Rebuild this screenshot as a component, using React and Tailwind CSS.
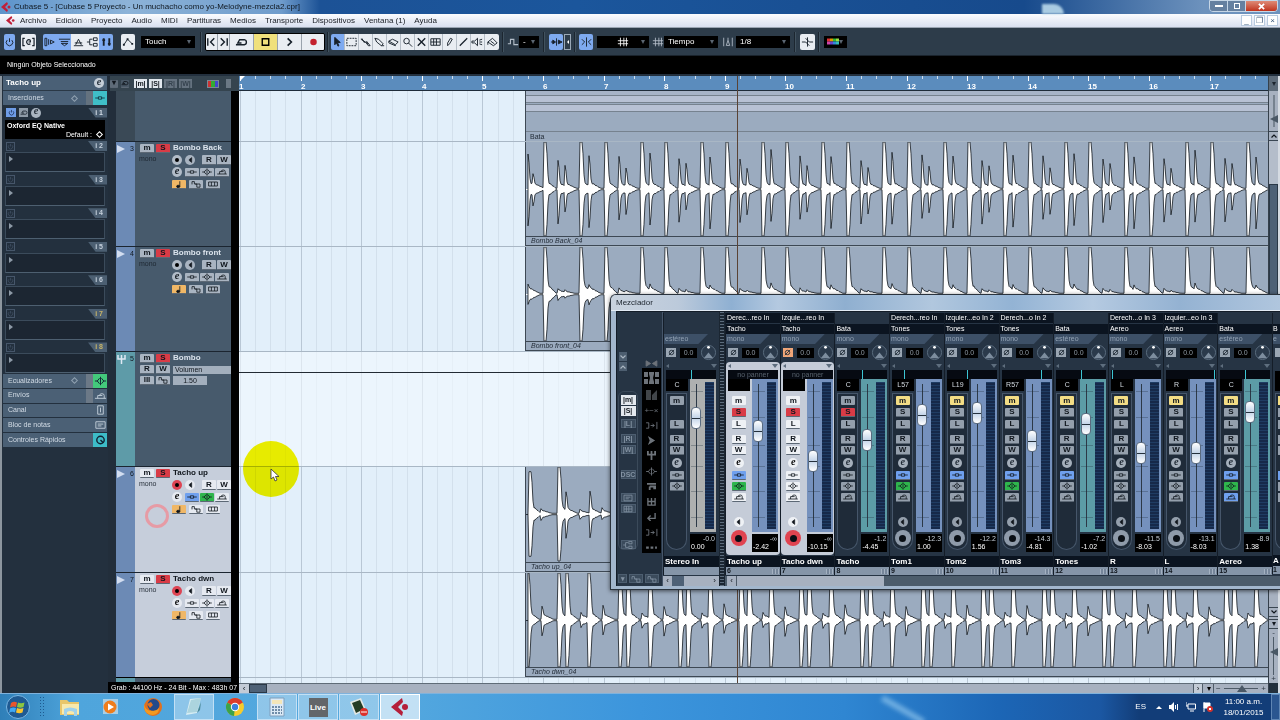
// src/App.jsx
import { useState } from "react";

// --- timeline geometry ---
const BAR = 60.6;
const barX = (n) => Math.round((n - 1) * BAR);
const EVENT_X = 286;

// hits per bar: [offset, amplitude]
const PATTERNS = {
  back: { hits: [[1, 1], [15, 0.75], [22, 0.55], [37, 1], [46, 0.85]], extra: [[7, 0.38]], body: 0.24, line: "#ffffff" },
  front: { hits: [[1, 1], [15, 0.14], [22, 0.1], [37, 1], [46, 0.24]], extra: [], body: 0.32, line: "#ffffff" },
  tachoUp: { hits: [[15, 1], [23, 0.55], [37, 0.12], [47, 0.55], [59, 0.14]], extra: [[3, 0.9]], body: 0.26, line: "#2b3440" },
  tachoDown: { hits: [[15, 1], [23, 1], [38, 0.18], [45, 1], [60, 0.35]], extra: [], body: 0.24, line: "#2b3440" },
};

function wavePath(kind, height) {
  const p = PATTERNS[kind];
  const mid = height / 2;
  const list = [...p.extra];
  for (let n = 5; n < 19; n++) {
    for (const [off, a] of p.hits) list.push([Math.round((n - 1) * BAR + off - EVENT_X), a]);
  }
  const up = [];
  const down = [];
  for (let x = 2; x < 760; x++) {
    let u = 0.015;
    let d = 0.015;
    for (const [h, a] of list) {
      const dx = x - h;
      if (dx < 0 || dx > 13) continue;
      const j = Math.abs(Math.sin(h * 12.9));
      const loud = a >= 0.9;
      const hold = loud ? 3 : 1;
      const spike = dx < hold ? a : a * 0.75 * Math.exp(-(dx - hold) / 1.1);
      const rough = 1 - 0.2 * Math.abs(Math.sin(x * 7.3));
      const tail = (loud ? p.body : Math.max(p.body * 0.9 * a, a > 0.3 ? 0.15 : a * 0.7)) * (1 - dx / 13) * rough;
      u = Math.max(u, loud ? spike : spike * (1 - j * 0.2), tail);
      d = Math.max(d, loud ? spike : spike * (0.8 + j * 0.2), tail);
    }
    up.push(`${x} ${(mid - u * mid).toFixed(1)}`);
    down.push(`${x} ${(mid + d * mid).toFixed(1)}`);
  }
  return `M${up.join("L")}L${down.reverse().join("L")}Z`;
}

const TRACKS = [
  { n: 3, name: "Bombo Back", h: "h-[105px]", clip: "Bombo Back_04", wave: "back" },
  { n: 4, name: "Bombo front", h: "h-[105px]", clip: "Bombo front_04", wave: "front" },
  { n: 5, name: "Bombo", h: "h-[115px]", group: true },
  { n: 6, name: "Tacho up", h: "h-[106px]", clip: "Tacho up_04", wave: "tachoUp", selected: true, fx: true },
  { n: 7, name: "Tacho dwn", h: "h-[105px]", clip: "Tacho dwn_04", wave: "tachoDown", selected: true },
];

const CHANNELS = [
  { n: 6, name: "Tacho up", input: "Derec...reo In", out: "Tacho", sel: true, pan: "", at: 53, peak: "-∞", val: "-2.42", solo: true, ins: true, eq: true },
  { n: 7, name: "Tacho dwn", input: "Izquie...reo In", out: "Tacho", sel: true, pan: "", at: 83, peak: "-∞", val: "-10.15", solo: true, phase: true },
  { n: 8, name: "Tacho", out: "Bata", group: true, pan: "C", panX: 50, at: 62, peak: "-1.2", val: "-4.45", solo: true },
  { n: 9, name: "Tom1", input: "Derech...reo In", out: "Tones", pan: "L57", panX: 23, at: 37, peak: "-12.3", val: "1.00", mute: true, ins: true, eq: true },
  { n: 10, name: "Tom2", input: "Izquier...eo In 2", out: "Tones", pan: "L19", panX: 40, at: 35, peak: "-12.2", val: "1.56", mute: true, ins: true },
  { n: 11, name: "Tom3", input: "Derech...o In 2", out: "Tones", pan: "R57", panX: 78, at: 63, peak: "-14.3", val: "-4.81", mute: true, ins: true, eq: true },
  { n: 12, name: "Tones", out: "Bata", group: true, stereo: true, pan: "C", panX: 50, at: 46, peak: "-7.2", val: "-1.02", mute: true, ins: true },
  { n: 13, name: "R", input: "Derech...o In 3", out: "Aereo", pan: "L", panX: 2, at: 75, peak: "-11.5", val: "-8.03", mute: true },
  { n: 14, name: "L", input: "Izquier...eo In 3", out: "Aereo", pan: "R", panX: 96, at: 75, peak: "-13.1", val: "-8.03", mute: true },
  { n: 15, name: "Aereo", out: "Bata", group: true, stereo: true, pan: "C", panX: 50, at: 34, peak: "-8.9", val: "1.38", mute: true, ins: true, eq: true, send: true },
];

// --- small glyphs, all on a 14x10 box ---
const GLYPHS = {
  ins: <path d="M1 5h4M9 5h4M5 3.5h4v3H5z" />,
  eq: <path d="M1 5h3M10 5h3M7 0.5v9M6 2L3.5 5L6 8M8 2l2.5 3L8 8" />,
  send: <path d="M1 7.5h12M4 7.5v-3h5M6 4.500a2.500 2 0 0 1 5 0v3" />,
  lock: <path d="M2 5.500V2h3v3h3M6 5h6v4H8V5" />,
  lanes: <path d="M1.500 2.500h11v5h-11zM5 2.500v5M9 2.500v5" />,
  note: <><ellipse cx="6" cy="8" rx="2" ry="1.500" fill="currentColor" /><path d="M8 8V1.500" /></>,
  monitor: <path d="M9 1v8L5 6V4z" fill="currentColor" />,
  power: <path d="M4.500 3a3.500 3.500 0 1 0 5 0M7 1v4" />,
  dial: <><circle cx="7" cy="5" r="4" strokeWidth="1.500" /><path d="M7 5l3 3" strokeWidth="1.500" /></>,
  clock: <path d="M3 1H1v8h2M11 1h2v8h-2M9 3a2.500 2.500 0 1 0 0 4M7 5h2V3" strokeWidth="1.300" />,
  inspector: <path d="M1 1v8h2V1zM5 2v6M7 3l4 2-4 2z" />,
  infoline: <path d="M1 2h12M3 4.500h8M7 9L3.500 6.500h7z" />,
  overview: <path d="M2 9h10M4 8l3-6 3 6M3 6h8" />,
  tree: <path d="M1 5h3M4 2v6M4 2h3M4 8h3M8 .5h4v3H8zM8 6.500h4v3H8z" />,
  mixer: <path d="M4 1v8M10 1v8M2.500 3h3M8.500 7h3" strokeWidth="2" />,
  curve: <><path d="M2 8l4-6 5 5" /><path d="M1 8h2M5 2h2M10 7h2" strokeWidth="2" /></>,
  prev: <path d="M3 1v8M10 1L6 5l4 4" strokeWidth="1.500" />,
  next: <path d="M11 1v8M4 1l4 4-4 4" strokeWidth="1.500" />,
  loop: <path d="M1 8h9a2.800 2.800 0 0 0 0-5.500H5L3 6h4" strokeWidth="1.500" />,
  stop: <path d="M3.500 1.500h7v7h-7z" strokeWidth="1.500" />,
  play: <path d="M5 1l4 4-4 4" strokeWidth="1.800" />,
  rec: <circle cx="7" cy="5" r="3.500" fill="#c3202d" stroke="none" />,
  arrow: <path d="M4 0v8l2-2 1.500 3.500 1-.5L7 5.500h3z" fill="currentColor" />,
  range: <path d="M2 1h10v8H2z" strokeDasharray="2 1" />,
  split: <path d="M2 2l8 5M3 1l3 5M8 4l4 5-2 0-3-4" />,
  glue: <path d="M2 1l4 1 5 5-2 2-5-4zM9 9h3" />,
  erase: <path d="M2 4l4-2 6 3-3 3zM2 4v2l7 3v-1" />,
  zoom: <><circle cx="6" cy="4" r="3" /><path d="M8 6l4 4" /></>,
  mute: <path d="M3 1l8 8M11 1L3 9" strokeWidth="1.500" />,
  comp: <path d="M2 1.500h10v7H2zM5 1.500v7M8 1.500v7M2 5h10" />,
  memo: <path d="M2 1.500h10v7H2zM4 4h6M4 6h4" />,
  strip: <path d="M4 .5h6v9H4zM7 2.500v5" />,
  pencil: <path d="M5 9V6l3-5 2 1-3 5z" />,
  line: <path d="M3 9l8-8" strokeWidth="1.300" />,
  play2: <path d="M1 4h3l3-3v8L4 6H1zM9 3l3-1M9 5h3M9 7l3 1" />,
  color: <path d="M2 5l5-4 5 5-4 3zM2 5v3M5 4l4 3" />,
  wave: <path d="M1 7h3V2h4v6h5" strokeWidth="1.300" />,
  scroll: <path d="M1 5h3M7 1v8M3 3l3 2-3 2zM9 3v4l4-2z" fill="currentColor" />,
  snap: <path d="M7 0v10M2 2l3 3-3 3M12 2L9 5l3 3" />,
  merge: <path d="M1 2l5 3-5 3zM13 2L8 5l5 3z" fill="currentColor" />,
  route: <path d="M1 2h3v6H1M6 5h4M8 3l2 2-2 2M13 1v8" />,
  audio: <path d="M3 0l8 5-8 5 2-5z" fill="currentColor" stroke="none" />,
  groups: <path d="M3 0v4h8V0M7 0v10" strokeWidth="2" />,
  bars: <path d="M2 2h10M5 5h7M5 5v4M9 7h3" strokeWidth="2" />,
  keys: <path d="M3 1v8h8V1M7 1v8M3 5h8" strokeWidth="1.500" />,
  back: <path d="M11 1v6H4M6 4L3 7l3 3" strokeWidth="1.500" />,
  dots: <path d="M1 5h3M6 5h3M11 5h2" strokeWidth="2.500" />,
  grid: <path d="M1 3.500h12M1 7h12M4 0v10M8 0v10M11 0v10" />,
  quant: <path d="M2 0v10M12 0v10M5 9l2-6 2 6zM7 3V0" />,
  cross: <path d="M1 5h4l4 4M7 0v10M5 1l4 4h4" />,
};

function Glyph({ name, className = "w-3 h-2" }) {
  return (
    <svg viewBox="0 0 14 10" className={`shrink-0 ${className}`} fill="none" stroke="currentColor" strokeWidth="1">
      {GLYPHS[name]}
    </svg>
  );
}

function ToolButton({ icon, label, active, className = "w-[14px]" }) {
  return (
    <button
      aria-label={label}
      className={`h-4 flex items-center justify-center text-[#17202a] ${active ? "bg-[#7eaaf0]" : "bg-[#e9edf2]"} ${className}`}
    >
      <Glyph name={icon} className="w-[13px] h-[10px]" />
    </button>
  );
}

function Drop({ label, value, className, children }) {
  return (
    <div className={`relative h-3 bg-black flex items-center ${className}`}>
      <select aria-label={label} className="w-full h-3 appearance-none bg-transparent pl-1 text-[8px] leading-3 text-white outline-none">
        <option>{value}</option>
      </select>
      {children && <span className="absolute inset-0 flex items-center justify-center pointer-events-none text-white">{children}</span>}
      <span className="absolute right-1 top-1 border-x-2 border-t-4 border-x-transparent border-t-[#5b6672] pointer-events-none" />
    </div>
  );
}

const Sep = () => <span className="block w-[2px] h-5 bg-[#1c2630] border-r border-[#41525f]" />;

function TitleBar() {
  return (
    <header className="relative h-[14px] shrink-0 flex items-center bg-[linear-gradient(90deg,#5d94cb_0%,#8db3d8_10%,#6f9ccc_22%,#1c5296_25%,#1b569c_45%,#174a8c_80%,#6d92bd_94%)] text-[#101820]">
      <svg viewBox="0 0 10 10" className="w-[10px] h-[10px] ml-px" fill="#c0203a">
        <path d="M6 0L0 5l6 5 1-2-3-3 3-3z" />
        <circle cx="8" cy="5" r="1.500" />
      </svg>
      <h1 className="ml-[3px] text-[8px]">Cubase 5 - [Cubase 5 Proyecto - Un muchacho como yo-Melodyne-mezcla2.cpr]</h1>
      <span className="absolute left-[1042px] top-1 w-[22px] h-[10px] rounded-tr-full bg-[#a9cbe2] blur-[1px]" />
      <div className="ml-auto mr-[2px] self-start flex h-[12px] rounded-b-sm overflow-hidden border border-[#c6d6e6] text-white">
        <button aria-label="Minimizar" className="w-[18px] flex items-center justify-center bg-[#6580a0] border-r border-[#c6d6e6]">
          <span className="w-2 h-[2px] bg-white" />
        </button>
        <button aria-label="Restaurar" className="w-[18px] flex items-center justify-center bg-[#6580a0] border-r border-[#c6d6e6]">
          <span className="w-[6px] h-[6px] border border-white" />
        </button>
        <button aria-label="Cerrar" className="w-[31px] flex items-center justify-center bg-linear-to-b from-[#dd8a76] to-[#c0301a]">
          <svg viewBox="0 0 8 8" className="w-[7px] h-[7px]" stroke="#fff" strokeWidth="2"><path d="M1 1l6 6M7 1L1 7" /></svg>
        </button>
      </div>
    </header>
  );
}

const MENU = ["Archivo", "Edición", "Proyecto", "Audio", "MIDI", "Partituras", "Medios", "Transporte", "Dispositivos", "Ventana (1)", "Ayuda"];

function MenuBar() {
  return (
    <nav className="h-[14px] shrink-0 flex items-center bg-linear-to-b from-[#fbfcfe] to-[#d9e0f0] text-[8px] text-[#181c24] border-b border-[#9aa5b2]">
      <svg viewBox="0 0 10 10" className="w-[9px] h-[9px] ml-[6px] mr-[5px]" fill="#c0203a">
        <path d="M6 0L0 5l6 5 1-2-3-3 3-3z" />
        <circle cx="8" cy="5" r="1.500" />
      </svg>
      <ul className="flex gap-[9px]">
        {MENU.map((m) => (
          <li key={m}><a href="#">{m}</a></li>
        ))}
      </ul>
      <div className="ml-auto mr-[2px] flex gap-[2px] text-[#3c5a7c]">
        {["_", "❐", "×"].map((c) => (
          <button key={c} className="w-[11px] h-[11px] flex items-center justify-center border border-[#b9cbe0] bg-white text-[8px] leading-none">{c}</button>
        ))}
      </div>
    </nav>
  );
}

function Toolbar() {
  const tools = ["arrow", "range", "split", "glue", "erase", "zoom", "mute", "comp", "pencil", "line", "play2", "color"];
  return (
    <div className="h-7 shrink-0 flex items-center pl-1 bg-[#2d3c4a] border-b border-[#1a232c]">
      <ToolButton icon="power" label="Activar proyecto" active className="w-[11px] rounded-xs" />
      <ToolButton icon="clock" label="Compensación" className="w-[15px] rounded-xs ml-[6px]" />
      <div className="ml-[7px] flex rounded-xs overflow-hidden">
        <ToolButton icon="inspector" label="Inspector" active />
        <ToolButton icon="infoline" label="Línea de información" active />
        <ToolButton icon="overview" label="Vista general" />
        <ToolButton icon="tree" label="Pool" />
        <ToolButton icon="mixer" label="Mezclador" active />
      </div>
      <ToolButton icon="curve" label="Automatización" className="w-[14px] rounded-xs ml-2" />
      <Drop label="Modo de automatización" value="Touch" className="ml-[6px] w-[54px]" />
      <span className="ml-[5px]"><Sep /></span>
      <div className="ml-[3px] flex rounded-xs overflow-hidden border border-black divide-x divide-[#9aa3ad]">
        <ToolButton icon="prev" label="Anterior" className="w-3" />
        <ToolButton icon="next" label="Siguiente" className="w-3" />
        <ToolButton icon="loop" label="Ciclo" className="w-6" />
        <button aria-label="Detener" className="w-6 h-4 flex items-center justify-center bg-[#f0e07c] text-black"><Glyph name="stop" className="w-[13px] h-[10px]" /></button>
        <ToolButton icon="play" label="Reproducir" className="w-6" />
        <ToolButton icon="rec" label="Grabar" className="w-[22px]" />
      </div>
      <span className="mx-[2px]"><Sep /></span>
      <div className="flex rounded-xs overflow-hidden divide-x divide-[#b5bdc6]">
        {tools.map((t, i) => <ToolButton key={t} icon={t} label={t} active={i === 0} />)}
      </div>
      <span className="mx-[3px]"><Sep /></span>
      <span className="text-[#b5bfca]"><Glyph name="wave" className="w-3 h-[10px]" /></span>
      <Drop label="Contorno" value="-" className="w-[20px]" />
      <span className="mx-1"><Sep /></span>
      <ToolButton icon="scroll" label="Desplazamiento automático" active className="w-[14px] rounded-xs" />
      <button aria-label="Suspender" className="ml-px w-[7px] h-4 border border-[#9aa8b6] flex items-center justify-center">
        <span className="border-y-2 border-r-2 border-y-transparent border-r-white" />
      </button>
      <span className="mx-[3px]"><Sep /></span>
      <ToolButton icon="snap" label="Ajustar" active className="w-[14px] rounded-xs" />
      <Drop label="Tipo de ajuste" value="" className="ml-1 w-[52px]"><Glyph name="grid" className="w-3 h-[10px]" /></Drop>
      <span className="ml-[3px] text-[#b5bfca]"><Glyph name="grid" className="w-3 h-[10px]" /></span>
      <Drop label="Rejilla" value="Tiempo" className="w-[54px]" />
      <span className="ml-1 text-[#b5bfca]"><Glyph name="quant" className="w-3 h-[10px]" /></span>
      <Drop label="Cuantización" value="1/8" className="ml-[2px] w-[54px]" />
      <span className="mx-1"><Sep /></span>
      <ToolButton icon="cross" label="Cruce por cero" className="w-[15px] rounded-xs" />
      <span className="mx-[3px]"><Sep /></span>
      <Drop label="Color" value="" className="ml-px w-[23px]">
        <svg viewBox="0 0 12 6" className="w-3 h-[7px] mr-[5px]">
          <path d="M0 0h3v3H0z" fill="#d33" /><path d="M3 0h3v3H3z" fill="#d90" /><path d="M6 0h3v3H6z" fill="#3b3" /><path d="M9 0h3v3H9z" fill="#9d4" />
          <path d="M0 3h3v3H0z" fill="#c4a" /><path d="M3 3h3v3H3z" fill="#64c" /><path d="M6 3h3v3H6z" fill="#38d" /><path d="M9 3h3v3H9z" fill="#3bb" />
        </svg>
      </Drop>
    </div>
  );
}

const EdgeE = ({ className = "bg-[#a9b4c0] text-[#1e2833]" }) => (
  <button aria-label="Editar canal" className={`w-[10px] h-[10px] shrink-0 rounded-full flex items-center justify-center font-serif italic font-bold text-[9px] leading-none ${className}`}>
    <span className="-mt-[2px]">e</span>
  </button>
);

function SlotHead({ n }) {
  return (
    <div className="h-[12px] flex items-center justify-between pl-[3px]">
      <button aria-label={`Inserción ${n}`} className="w-[9px] h-[9px] border border-[#46566a] text-[#46566a] flex items-center justify-center">
        <Glyph name="power" className="w-[9px] h-[7px]" />
      </button>
      <span className={`w-[19px] h-[10px] pr-1 text-right text-[7px] leading-[10px] font-bold bg-[#4c5f72] [clip-path:polygon(0_0,100%_0,100%_100%,40%_100%)] ${n > 6 ? "text-[#c8b568]" : "text-[#c5d0dc]"}`}>i {n}</span>
    </div>
  );
}

function Inspector() {
  const tabs = [
    ["Ecualizadores", "eq", "bg-[#43c97b] text-[#123]"],
    ["Envíos", "send", "text-[#c3ced9]"],
    ["Canal", "strip", "text-[#c3ced9]"],
    ["Bloc de notas", "memo", "text-[#c3ced9]"],
    ["Controles Rápidos", "dial", "bg-[#3dbcc8] text-[#123]"],
  ];
  return (
    <aside className="w-[108px] shrink-0 pl-[1px] pr-px border-l-2 border-[#8d969f] bg-[#23303e] text-[#d3dce6] text-[7px]">
      <div className="h-[15px] px-[3px] flex items-center justify-between bg-[#4a6076] border-b border-[#2a3846]">
        <b className="text-[8px] text-white">Tacho up</b>
        <EdgeE className="bg-[#c5ced8] text-[#1e2833]" />
      </div>
      <div className="h-[14px] pl-[5px] flex items-center bg-[#4b6178]">
        <span className="flex-1">Inserciones</span>
        <span className="w-[5px] h-[5px] rotate-45 border border-[#8fa0b0] mr-[9px]" />
        <span className="w-[7px] h-[14px] bg-[#64727f]" />
        <button aria-label="Bypass inserciones" className="w-[14px] h-[14px] flex items-center justify-center bg-[#3fbfc8] text-[#0c2a33]"><Glyph name="ins" /></button>
      </div>
      <div className="h-[15px] flex items-center gap-[3px] pl-[3px]">
        <button aria-label="Activar i1" className="w-[10px] h-[9px] bg-[#6f9de8] text-[#102040] flex items-center justify-center"><Glyph name="power" className="w-[9px] h-[7px]" /></button>
        <button aria-label="Bypass i1" className="w-[9px] h-[9px] bg-[#8e9aa7] text-[#1e2833] flex items-center justify-center"><Glyph name="loop" className="w-[8px] h-[7px]" /></button>
        <EdgeE />
        <span className="ml-auto w-[19px] h-[10px] pr-1 text-right text-[7px] leading-[10px] font-bold bg-[#4c5f72] [clip-path:polygon(0_0,100%_0,100%_100%,40%_100%)]">i 1</span>
      </div>
      <div className="mx-[2px] h-[19px] pt-px px-[2px] bg-black text-white leading-[9px]">
        <b className="block">Oxford EQ Native</b>
        <span className="flex justify-end items-center gap-[5px]">Default : <i className="w-[5px] h-[5px] mr-px rotate-45 border border-white" /></span>
      </div>
      <div className="h-[235px] grid grid-rows-7">
        {[2, 3, 4, 5, 6, 7, 8].map((n) => (
          <div key={n} className="pt-px flex flex-col">
            <SlotHead n={n} />
            <button aria-label={`Elegir efecto ${n}`} className="mx-[2px] h-5 bg-[#1c2632] border border-[#3b4b5b] border-b-[#4d5f70] flex items-start pt-[3px] pl-[3px]">
              <span className="border-y-[3px] border-l-4 border-y-transparent border-l-[#8c99a6]" />
            </button>
          </div>
        ))}
      </div>
      <div className="h-[73px] grid grid-rows-5 gap-px">
        {tabs.map(([t, g, c], i) => (
          <div key={t} className="flex items-center pl-[5px] bg-[#4b6075]">
            <span className="flex-1">{t}</span>
            {i === 0 && <span className="w-[5px] h-[5px] rotate-45 border border-[#8fa0b0] mr-[9px]" />}
            {i < 2 && <span className="w-[7px] h-full bg-[#6c7987]" />}
            <button aria-label={t} className={`w-[14px] h-full flex items-center justify-center ${c}`}><Glyph name={g} className="w-[13px] h-[10px]" /></button>
          </div>
        ))}
      </div>
    </aside>
  );
}

function Key({ children, tone = "bg-[#a9b3bf]", label, className = "w-[14px] h-[9px]" }) {
  return (
    <button aria-label={label} className={`shrink-0 flex items-center justify-center rounded-[1px] text-[8px] leading-none font-bold text-[#10161d] border-b border-[#5c6875] ${tone} ${className}`}>
      {children}
    </button>
  );
}

function Track({ t }) {
  const base = t.selected ? "bg-[#e6eaf1]" : "bg-[#a9b4c1]";
  const round = "w-[10px] h-[10px] rounded-full flex items-center justify-center shrink-0";
  return (
    <li className={`flex border-t border-[#1b2530] ${t.h}`}>
      <div className={`w-[19px] shrink-0 flex justify-between pt-[3px] pr-px pl-px text-[7px] leading-2 text-[#101820] ${t.group ? "bg-[#5e9ba8]" : "bg-[#6c8ab5]"}`}>
        {t.group ? (
          <svg viewBox="0 0 9 9" className="w-[9px] h-[9px]" stroke="#dfe9f4" strokeWidth="1.500" fill="none"><path d="M1 0v4h7V0M4.500 0v9" /></svg>
        ) : (
          <span className="h-0 border-y-4 border-l-8 border-y-transparent border-l-[#d2ddf0]" />
        )}
        <span>{t.n}</span>
      </div>
      <div className={`flex-1 min-w-0 overflow-hidden pl-[5px] ${t.selected ? "bg-[#c6cedb] text-[#10161d]" : "bg-[#475a6c] text-[#dbe3ec]"}`}>
        <div className="h-3 flex items-center gap-[2px]">
          <Key tone={base} label="Mute">m</Key>
          <Key tone="bg-[#d93b46]" label="Solo">S</Key>
          <b className="ml-px text-[8px] whitespace-nowrap">{t.name}</b>
        </div>
        {t.group ? (
          <>
            <div className="h-[11px] flex items-center gap-[2px]">
              <Key tone={base}>R</Key>
              <Key tone={base}>W</Key>
              <span className="ml-px flex-1 h-2 bg-[#a3afbd] text-[#10161d] text-[7px] leading-2 pl-[2px]">Volumen</span>
            </div>
            <div className="h-[11px] flex items-center gap-[2px]">
              <Key tone={base}>III</Key>
              <Key tone={base} label="Bloquear"><Glyph name="lock" /></Key>
              <span className="ml-px w-[34px] h-[9px] bg-[#a3afbd] text-[#10161d] text-[7px] leading-[9px] text-center">1.50</span>
            </div>
          </>
        ) : (
          <div className="flex">
            <span className={`w-8 -ml-px shrink-0 text-[7px] leading-[10px] ${t.selected ? "text-[#28313b]" : "text-[#1d2731]"}`}>mono</span>
            <div className="min-w-0 pl-px">
              <div className="h-3 flex items-center">
                <button aria-label="Grabar" className={`${round} ${t.selected ? "bg-[#dd4453]" : "bg-[#b2bcc8]"}`}><i className="w-1 h-1 rounded-full bg-black" /></button>
                <button aria-label="Monitor" className={`${round} ml-[3px] text-[#10161d] ${base}`}><Glyph name="monitor" className="w-[9px] h-[6px]" /></button>
                <Key tone={base} className="w-[14px] h-[10px] ml-[7px]">R</Key>
                <Key tone={base} className="w-[14px] h-[10px] ml-px">W</Key>
              </div>
              <div className="h-3 flex items-center">
                <EdgeE className={t.selected ? "bg-[#e6eaf1] text-black" : "bg-[#b2bcc8] text-[#10161d]"} />
                <Key tone={t.fx ? "bg-[#6fa0ee]" : base} label="Inserciones" className="w-[14px] h-[9px] ml-[3px]"><Glyph name="ins" /></Key>
                <Key tone={t.fx ? "bg-[#2fb54d]" : base} label="EQ" className="w-[14px] h-[9px] ml-px"><Glyph name="eq" /></Key>
                <Key tone={base} label="Envíos" className="w-[14px] h-[9px] ml-px"><Glyph name="send" /></Key>
              </div>
              <div className="h-3 flex items-center gap-[3px]">
                <Key tone="bg-[#f0b766]" label="Base musical"><Glyph name="note" /></Key>
                <Key tone={base} label="Bloquear"><Glyph name="lock" /></Key>
                <Key tone={base} label="Carriles"><Glyph name="lanes" /></Key>
              </div>
            </div>
          </div>
        )}
      </div>
    </li>
  );
}

function TrackList() {
  return (
    <section className="w-[131px] shrink-0 flex flex-col bg-[#222e3b]">
      <div className="h-[15px] shrink-0 ml-[2px] flex items-center gap-[3px] bg-[#35444f] text-[7px] leading-none font-bold">
        <Key tone="bg-[#5e6b78]" className="w-2 h-2">▾</Key>
        <Key tone="bg-[#4a5967]" className="w-2 h-2 mr-[3px]" label="Ver"><Glyph name="loop" className="w-2 h-[6px]" /></Key>
        {["m", "S", "R", "W"].map((k, i) => (
          <button key={k} className={`-ml-px w-[13px] h-[9px] leading-[8px] border ${i < 2 ? "bg-[#e2e8ee] border-[#e2e8ee] text-[#10161d]" : "bg-[#65727f] border-[#65727f] text-[#35424e]"}`}>|{k}|</button>
        ))}
        <button aria-label="Colores" className="ml-3 w-3 h-2 border border-[#7b8894] bg-[linear-gradient(90deg,#c33_33%,#3a3_33%,#3a3_66%,#44c_66%)]" />
        <span className="ml-1 w-[5px] h-[9px] bg-[#6b7884]" />
      </div>
      <div className="flex-1 min-h-0 ml-[8px] flex overflow-hidden">
        <div className="w-[115px] shrink-0">
          <div className="h-[50px] flex">
            <span className="w-[19px] bg-[#3a4956]" />
            <span className="flex-1 bg-[#475a6c]" />
          </div>
          <ul>
            {TRACKS.map((t) => <Track key={t.n} t={t} />)}
            <li className="h-[10px] flex border-t border-black"><span className="w-[19px] bg-[#5e9ba8]" /><span className="flex-1 bg-[#475a6c]" /></li>
          </ul>
        </div>
        <div className="flex-1 bg-black" />
      </div>
      <div className="h-[11px] shrink-0 bg-black text-white text-[7px] leading-[11px] pl-[3px] overflow-hidden whitespace-nowrap">Grab : 44100 Hz - 24 Bit - Max : 483h 07</div>
    </section>
  );
}

function Ruler() {
  const ticks = [];
  for (let i = 0; i < 18 * 4; i++) ticks.push(i);
  return (
    <div className="h-[15px] shrink-0 bg-[#5b8cbd] border-b border-[#1f2c3a] overflow-hidden">
      <svg className="w-full h-[15px] block" fill="#fff" fontFamily="'Liberation Sans', sans-serif" fontSize="8" fontWeight="700">
        <path d="M1 0h5L1 5z" />
        {ticks.map((i) => (
          <rect key={i} x={1 + Math.round((i * BAR) / 4)} y="0" width="1" height={i % 4 ? 3 : 5} opacity={i % 4 ? 0.7 : 1} />
        ))}
        {Array.from({ length: 17 }, (_, i) => (
          <text key={i} x={barX(i + 1) + (i ? 1 : 0)} y="13">{i + 1}</text>
        ))}
      </svg>
    </div>
  );
}

function GridLines() {
  return (
    <svg className="absolute inset-0 w-full h-full" aria-hidden="true">
      {Array.from({ length: 68 }, (_, i) => (
        <rect key={i} x={1 + Math.round((i * BAR) / 4)} y="0" width="1" height="100%" fill={i % 4 ? "#d3e0ec" : "#b9c7d5"} />
      ))}
    </svg>
  );
}

function Clip({ t }) {
  return (
    <div className="ml-[286px] h-full flex flex-col bg-[#9babbf] border border-t-0 border-r-0 border-[#3d4854]">
      <svg className="flex-1 min-h-0 w-full block" aria-hidden="true">
        <rect x="0" y="47" width="100%" height="1" fill={PATTERNS[t.wave].line} />
        <path d={wavePath(t.wave, 94)} fill="#ffffff" stroke="#10161d" strokeWidth="0.800" />
      </svg>
      <span className="h-[9px] shrink-0 border-t border-[#3d4854] pl-[5px] text-[7px] leading-[8px] italic text-[#1f2833]">{t.clip}</span>
    </div>
  );
}

function Timeline() {
  return (
    <section className="relative flex-1 min-w-0 flex flex-col">
      <Ruler />
      <div className="relative flex-1 min-h-0 overflow-hidden bg-[#e2effa]">
        <GridLines />
        <div className="relative">
          <div className="h-[50px]">
            <div className="ml-[286px] h-full flex flex-col bg-[#9babbf] border-l border-[#3d4854]">
              <span className="h-[5px] bg-[#a7b4c8] border-b border-[#76828f]" />
              <span className="h-[7px] bg-[#b7c1d4] border-b border-[#76828f]" />
              <span className="h-[8px] mt-px bg-[#b7c1d4] border-y border-[#76828f]" />
              <span className="flex-1 border-b border-[#76828f]" />
              <span className="h-[9px] pl-1 text-[7px] leading-[9px] text-[#1f2833]">Bata</span>
            </div>
          </div>
          {TRACKS.map((t) => (
            <div key={t.n} className={`border-t border-[#a9b7c5] ${t.h} ${t.group ? "bg-[#f4f9ff]/60" : ""}`}>
              {t.clip ? <Clip t={t} /> : <div className="h-[21px] border-b border-[#222a33]" />}
            </div>
          ))}
          <div className="border-t border-[#a9b7c5]" />
        </div>
      </div>
      <span className="absolute top-0 bottom-[10px] left-[498px] w-px bg-[#5a4335]" />
      <div className="h-[10px] shrink-0 flex items-center border-t border-[#5f6c78] bg-[#a7b1c0] text-[8px] leading-none">
        <button aria-label="Izquierda" className="w-[10px] h-full bg-[#c3cbd6] text-[#10161d] leading-none">‹</button>
        <span className="w-[18px] h-[9px] bg-[#4e6176] border border-[#2a3846]" />
        <span className="flex-1" />
        <button aria-label="Derecha" className="w-[10px] h-full border-x border-[#4e5b68] bg-[#c3cbd6] text-[#10161d] leading-none">›</button>
        <button aria-label="Menú de zoom" className="ml-[2px] w-[9px] h-full border-r border-[#4e5b68] leading-none">▾</button>
        <label className="relative w-[54px] flex items-center justify-between px-[2px] text-[#303b46]">
          <span>−</span>
          <span className="w-[34px] h-px bg-[#4e5b68]" />
          <span>+</span>
          <i className="absolute left-[23px] top-0 border-x-[5px] border-b-[7px] border-x-transparent border-b-[#4a5866]" />
          <input type="range" aria-label="Zoom horizontal" className="absolute inset-0 w-full h-full opacity-0" />
        </label>
      </div>
    </section>
  );
}

function Chevron({ up }) {
  return <svg viewBox="0 0 6 4" className="w-[6px] h-1" fill="none" stroke="currentColor" strokeWidth="1.200"><path d={up ? "M.5 3.500L3 1l2.500 2.500" : "M.5.5L3 3 5.500.5"} /></svg>;
}

function SideScroll() {
  const arrow = "h-[10px] shrink-0 flex items-center justify-center bg-[#a7b1c0] border-y border-[#3a4652] text-[8px] leading-none text-[#10161d]";
  return (
    <div className="w-[12px] shrink-0 flex flex-col bg-[#a7b1c0] border-l border-[#35404b] border-r-2 border-r-[#d5dbe2]">
      <button aria-label="Opciones de regla" className="h-[15px] shrink-0 bg-[#5d6b79] text-[8px] leading-none text-[#1b242d]">▾</button>
      <div className="relative h-10 shrink-0 flex justify-center">
        <span className="w-[2px] h-8 mt-1 bg-[#76828f]" />
        <i className="absolute right-0 top-[24px] border-y-4 border-r-8 border-y-transparent border-r-[#4a5866]" />
      </div>
      <button aria-label="Subir" className={arrow}><Chevron up /></button>
      <div className="flex-1 min-h-0 flex flex-col">
        <span className="h-[43px] bg-[#b4bdca]" />
        <span className="h-[140px] bg-[#4e6176] border border-[#2a3846]" />
      </div>
      <button aria-label="Bajar" className={arrow}><Chevron /></button>
      <button aria-label="Menú vertical" className={`${arrow} mt-[2px]`}>▾</button>
      <div className="relative h-[54px] shrink-0 flex flex-col items-center justify-between text-[8px] leading-none text-[#303b46]">
        <span>-</span>
        <span className="w-px flex-1 bg-[#4e5b68]" />
        <span>+</span>
        <i className="absolute right-0 top-[19px] border-y-4 border-r-8 border-y-transparent border-r-[#4a5866]" />
      </div>
      <span className="h-[10px] shrink-0 bg-[#23303d]" />
    </div>
  );
}

// --- mixer ---
function Channel({ c }) {
  const [mute, setMute] = useState(!!c.mute);
  const off = c.sel ? "bg-[#eef1f5]" : "bg-[#949fac]";
  const fader = c.stereoIn ? "bg-[#aeb0b0]" : c.group ? "bg-[#5c9ca6]" : "bg-[#7591bd]";
  const key = "w-[14px] h-[9px]";
  const round = "rounded-full flex items-center justify-center shrink-0";
  const stereo = c.stereo || c.stereoIn;
  return (
    <div className="min-w-0 flex flex-col border-l border-[#141d28] text-white text-[7px]">
      <span className={`h-[10px] pl-px leading-[10px] whitespace-nowrap overflow-hidden ${c.input ? "bg-[#0b1420]" : ""}`}>{c.input}</span>
      <span className={`h-[10px] mt-px pl-px leading-[10px] ${c.out ? "bg-[#0b1420]" : ""}`}>{c.out}</span>
      <span className="h-[10px] w-[44px] pl-px leading-[10px] bg-[#3d5067] text-[#93a3b5] [clip-path:polygon(0_0,100%_0,78%_100%,0_100%)]">{stereo ? "estéreo" : "mono"}</span>
      <div className="h-[18px] pb-px flex items-center pl-[2px]">
        <button aria-label="Invertir fase" className={`w-[10px] h-[9px] flex items-center justify-center text-[#202b36] ${c.phase ? "bg-[#f0a678]" : "bg-[#9aa6b3]"}`}>
          <svg viewBox="0 0 8 8" className="w-[7px] h-[7px]" fill="none" stroke="currentColor"><circle cx="4" cy="4" r="2.500" /><path d="M1 7l6-6" /></svg>
        </button>
        <span className="ml-1 w-[17px] h-[10px] bg-black text-[#8f9aa5] text-center leading-[10px]">0.0</span>
        <svg viewBox="0 0 18 18" className="ml-[3px] w-[17px] h-[17px]">
          <circle cx="9" cy="9" r="7.500" fill="#2b3a4b" stroke="#5b6d80" />
          <path d="M9 9l-5 6h10z" fill="#7d8d9e" /><circle cx="9" cy="3.500" r="1.500" fill="#fff" />
        </svg>
      </div>
      <div className={`h-[193px] pl-[2px] ${c.sel ? "bg-[#c5ccd8] rounded-sm" : ""}`}>
        <div className="h-2 flex justify-between items-center pr-[2px]">
          <i className="border-y-2 border-r-[3px] border-y-transparent border-r-[#5e6e7e]" />
          <i className="border-x-[3px] border-t-4 border-x-transparent border-t-[#5e6e7e]" />
        </div>
        <div className="relative w-[50px] h-[9px] bg-[#060a12] text-[#59636e] text-center leading-[9px]">
          {c.pan ? <i className="absolute inset-y-0 w-px bg-[#3cc6d4]" style={{ left: `${c.panX}%` }} /> : "no panner"}
        </div>
        <div className="flex w-[50px]">
          <div className="w-6">
            <span className="block h-[12px] w-[22px] bg-black text-center leading-[12px] text-[#d3dae1]">{c.pan}</span>
            <div className={`mt-[2px] h-[157px] w-[21px] pt-[2px] flex flex-col items-center rounded-b-full rounded-t-md border ${c.sel ? "border-[#c5ccd8]" : "border-[#46566a] bg-[#1f2b39]"}`}>
              <button aria-label="Mute" onClick={() => setMute((m) => !m)} className={`${key} flex items-center justify-center rounded-[1px] text-[8px] leading-none font-bold text-[#10161d] ${mute ? "bg-[#f3dd85]" : off}`}>m</button>
              {c.stereoIn ? <span className={`${key} mt-[3px]`} /> : <Key tone={c.solo ? "bg-[#d93b46]" : off} className={`${key} mt-[3px]`}>S</Key>}
              <Key tone={off} className={`${key} mt-[3px]`}>L</Key>
              <Key tone={off} className={`${key} mt-[6px]`}>R</Key>
              <Key tone={off} className={`${key} mt-[2px]`}>W</Key>
              <span className="mt-[3px]"><EdgeE className={c.sel ? "bg-[#eef1f5] text-black" : "bg-[#a5afbb] text-[#1e2833]"} /></span>
              <Key tone={c.ins ? "bg-[#6fa0ee]" : off} label="Inserciones" className={`${key} mt-[3px]`}><Glyph name="ins" /></Key>
              <Key tone={c.eq ? "bg-[#2fb54d]" : off} label="EQ" className={`${key} mt-[2px]`}><Glyph name="eq" /></Key>
              {!c.stereoIn && <Key tone={c.send ? "bg-[#6fa0ee]" : off} label="Envíos" className={`${key} mt-[2px]`}><Glyph name="send" /></Key>}
              {!c.group && !c.stereoIn && (
                <>
                  <button aria-label="Monitor" className={`mt-[15px] w-[10px] h-[10px] text-[#10161d] ${round} ${off}`}><Glyph name="monitor" className="w-[9px] h-[6px]" /></button>
                  <button aria-label="Grabar" className={`mt-[3px] w-4 h-4 ${round} ${c.sel ? "bg-[#e04450]" : "bg-[#8f9baa]"}`}>
                    <i className="w-[7px] h-[7px] rounded-full bg-[#0a0f15]" />
                  </button>
                </>
              )}
            </div>
          </div>
          <div className="w-[26px]">
            <div className={`relative h-[153px] ${fader}`}>
              <span className="absolute left-[6px] top-[5px] bottom-[5px] w-px bg-[#2c3947]" />
              {[12, 38, 66, 87, 112, 138].map((y) => (
                <span key={y} className="absolute left-[1px] w-3 h-px bg-[#1d2a38]/30" style={{ top: y }} />
              ))}
              <span className="absolute left-[15px] top-[3px] bottom-[3px] w-[9px] bg-[repeating-linear-gradient(180deg,#1f3c63_0_1px,#16294a_1px_3px)]" />
              <span className="absolute left-[1px] w-[10px] h-[22px] rounded-[4px] border border-[#5a6b80] bg-linear-to-b from-white via-[#c3d4e8] to-white flex items-center" style={{ top: c.at - 12 }}>
                <i className="w-full h-px bg-[#24303c]" />
              </span>
              <input type="range" aria-label={`Nivel ${c.name}`} defaultValue={150 - c.at} max={150} className="absolute inset-0 w-full h-full opacity-0 [writing-mode:vertical-lr] [direction:rtl]" />
            </div>
            <div className="mt-[2px] h-[18px] bg-black leading-[9px] px-px">
              <span className="block text-right text-[#c8d0d8]">{c.peak}</span>
              <span className="block -mt-px">{c.val}</span>
            </div>
          </div>
        </div>
      </div>
      <b className="h-[11px] mt-px pl-px bg-[#0b1420] text-[8px] leading-[11px] whitespace-nowrap">{c.name}</b>
      <span className="h-[8px] pl-px flex items-center justify-between bg-[#8595a8] text-[#10161d] font-bold">
        {c.n} {c.n && <i className="w-2 h-[5px] bg-[repeating-linear-gradient(90deg,#a4b1c1_0_1px,#76869a_1px_3px)]" />}
      </span>
    </div>
  );
}

// left edge of the next channel, peeking in at the window's end
function ChannelEdge() {
  return (
    <div className="flex flex-col border-l border-[#141d28] text-white text-[7px]">
      <span className="h-[10px]" />
      <span className="h-[10px] mt-px leading-[10px] bg-[#0b1420]">B</span>
      <span className="h-[10px] leading-[10px] bg-[#3d5067] text-[#93a3b5]">e</span>
      <span className="ml-[2px] mt-1 w-[10px] h-[9px] bg-[#9aa6b3]" />
      <span className="ml-[2px] mt-[14px] w-6 h-5 bg-black" />
      <div className="ml-[2px] mt-[2px] h-[157px] w-[21px] pt-[2px] flex flex-col rounded-b-full rounded-t-md border border-[#46566a] bg-[#1f2b39]">
        <span className="ml-[2px] h-[9px] bg-[#f3dd85]" />
        <span className="ml-[2px] mt-[3px] h-[9px] bg-[#949fac]" />
        <span className="ml-[2px] mt-[3px] h-[9px] bg-[#949fac]" />
        <span className="ml-[2px] mt-[6px] h-[9px] bg-[#949fac]" />
        <span className="ml-[2px] mt-[2px] h-[9px] bg-[#949fac]" />
        <span className="ml-1 mt-[3px] h-[10px] rounded-full bg-[#a5afbb]" />
        <span className="ml-[2px] mt-[3px] h-[9px] bg-[#6fa0ee]" />
        <span className="ml-[2px] mt-[2px] h-[9px] bg-[#949fac]" />
        <span className="ml-[2px] mt-[2px] h-[9px] bg-[#949fac]" />
      </div>
      <b className="h-[11px] mt-[5px] bg-[#0b1420] text-[8px] leading-[11px]">A</b>
      <b className="h-[8px] leading-[8px] bg-[#8595a8] text-[#10161d]">1</b>
    </div>
  );
}

function MixerTools() {
  const dim = "h-[9px] border border-[#4d5e70] bg-[#3b4b5c] text-[7px] leading-[8px] font-bold text-[#8493a3] flex items-center justify-center shrink-0";
  const lit = "w-[15px] h-[10px] bg-[#e4e9ef] text-[7px] leading-[10px] font-bold text-[#10161d] flex items-center justify-center shrink-0";
  return (
    <div className="w-[46px] shrink-0 flex flex-col border-r border-[#46566a] pt-10 px-px">
      <div className="flex flex-col gap-px pl-px text-[#a9b5c1]">
        <button aria-label="Contraer" className="w-2 h-[9px] bg-[#4d5e70] flex items-center justify-center"><Chevron /></button>
        <button aria-label="Expandir" className="w-2 h-[9px] bg-[#4d5e70] flex items-center justify-center"><Chevron up /></button>
      </div>
      <div className="flex justify-between">
        <div className="mt-5 w-5 h-[159px] pt-[3px] flex flex-col items-center rounded-md border border-[#3b4a5a]">
          <button className={lit}>|m|</button>
          <button className={`${lit} mt-px`}>|S|</button>
          <button className={`${dim} w-[15px] mt-[3px]`}>|L|</button>
          <button className={`${dim} w-[15px] mt-[6px]`}>|R|</button>
          <button className={`${dim} w-[15px] mt-[2px]`}>|W|</button>
          <button className={`${dim} w-[15px] mt-4`}>DSC</button>
          <button aria-label="Copiar" className={`${dim} w-[15px] mt-[14px]`}><Glyph name="memo" /></button>
          <button aria-label="Pegar" className={`${dim} w-[15px] mt-[2px]`}><Glyph name="comp" /></button>
          <button aria-label="Canales" className={`${dim} w-[15px] mt-[27px]`}><Glyph name="tree" /></button>
        </div>
        <div className="-mt-[12px] w-[19px] text-[#6d737a]">
          <Glyph name="merge" className="w-[19px] h-[9px]" />
          <div className="h-[185px] bg-black flex flex-col items-center justify-between pt-1 pb-px">
            <svg viewBox="0 0 15 12" className="w-[15px] h-3" fill="currentColor"><path d="M0 0h4v5H0zM0 7h4v5H0zM5 0h5v2l-1 4 1 4v2H5v-2l1-4-1-4zM11 0h4v5h-4zM11 7h4v5h-4z" /></svg>
            <svg viewBox="0 0 12 10" className="w-3 h-[10px]" fill="currentColor"><path d="M0 0h5v10H0zM6 5l5-5v10H6z" opacity=".6" /></svg>
            <span className="text-[8px] leading-none">+−×</span>
            {["route", "audio", "groups", "eq", "bars", "keys", "back", "route", "dots"].map((g, i) => (
              <Glyph key={i} name={g} className="w-[13px] h-[9px]" />
            ))}
          </div>
        </div>
      </div>
      <div className="mt-auto mb-[3px] flex gap-[2px]">
        <button aria-label="Menú" className={`${dim} w-[9px]`}>▾</button>
        <button aria-label="Guardar vista" className={`${dim} w-[14px]`}><Glyph name="lock" /></button>
        <button aria-label="Quitar vista" className={`${dim} w-[14px]`}><Glyph name="lock" /></button>
      </div>
    </div>
  );
}

function Mixer() {
  const end = "w-[9px] h-full bg-[#a7b1c0] text-[#10161d] text-[8px] leading-none";
  return (
    <section className="absolute left-[610px] right-0 top-[218px] rounded-tl-md overflow-hidden border border-r-0 border-[#2a333d] bg-[#a3b7cd] pl-[5px] pb-[3px] shadow-[0_1px_4px_rgba(0,0,0,.6)]">
      <h2 className="h-[16px] -ml-[5px] pl-[5px] text-[8px] leading-[15px] text-[#1c242d] border-b border-[#e3ebf4] bg-[linear-gradient(90deg,#c9d3de_0,#bccadb_10%,#8fb0d2_18%,#b4c9e0_25%,#8fafd0_35%,#b1c7de_48%,#93b3d4_60%,#b5cae1_72%,#94b2d2_85%,#b0c6de)]">Mezclador</h2>
      <div className="flex h-[275px] bg-[#263444] border-l border-t border-[#141d28] overflow-hidden">
        <MixerTools />
        <div className="w-[56px] shrink-0 flex flex-col pt-px">
          <Channel c={{ stereoIn: true, name: "Stereo In", pan: "C", panX: 50, at: 40, peak: "-0.0", val: "0.00" }} />
          <div className="mt-px h-[10px] flex bg-[#a7b1c0]">
            <button aria-label="Entradas anteriores" className={end}>‹</button>
            <span className="w-3 bg-[#4e6176]" />
            <span className="flex-1" />
            <button aria-label="Entradas siguientes" className={end}>›</button>
          </div>
        </div>
        <div className="w-[6px] shrink-0 bg-[repeating-linear-gradient(180deg,#5c6c7c_0_1px,#1b2632_1px_3px)] border-x border-[#1b2632]" />
        <div className="flex-1 min-w-0 flex flex-col pt-px overflow-hidden">
          <div className="flex">
            <div className="grid grid-cols-10 w-[547px] shrink-0">
              {CHANNELS.map((c) => <Channel key={c.n} c={c} />)}
            </div>
            <div className="flex-1 min-w-0 overflow-hidden"><ChannelEdge /></div>
          </div>
          <div className="mt-px h-[10px] flex bg-[#4c5c6b]">
            <button aria-label="Canales anteriores" className={`${end} ml-[2px]`}>‹</button>
            <span className="w-[148px] bg-[#a7b1c0] border-l border-[#4e5b68]" />
          </div>
        </div>
      </div>
    </section>
  );
}

function Taskbar() {
  const app = "h-full w-[40px] flex items-center justify-center";
  const open = "border border-[#cfe6f8]/80 bg-white/35";
  return (
    <footer className="relative h-[27px] shrink-0 flex items-center overflow-hidden border-t border-[#7fb2dc] text-white bg-[linear-gradient(90deg,#2f7fb8_0%,#4fa5dc_6%,#55a9df_30%,#3c95dc_50%,#2f86d2_66%,#1c66b6_78%,#1b57a2_86%,#123d78_89%,#123d78_100%)]">
      <span className="absolute left-[900px] -top-2 w-[6px] h-12 -rotate-60 bg-[#9fd0f2]/60 blur-[2px]" />
      <button aria-label="Inicio" className="ml-[6px]">
        <svg viewBox="0 0 24 24" className="w-6 h-6">
          <circle cx="12" cy="12" r="11.500" fill="#1f5a92" stroke="#7cb8e4" />
          <path d="M5 8q3-2 6-.5l-1 4.500q-3-1-6 .5z" fill="#e8562c" /><path d="M12 7.500q3 1.500 6.500 0l-1 4.500q-3 1.500-6.500 0z" fill="#8cc63f" />
          <path d="M4 13.500q3-1.500 6-.5l-1 4.500q-3-1.500-6 .5z" fill="#3fa9f5" /><path d="M11 13q3 1.500 6.500 0l-1 4.500q-3 1.500-6.500 0z" fill="#fbc52d" />
        </svg>
      </button>
      <span className="ml-[9px] w-[5px] h-[22px] bg-[radial-gradient(#1d5a90_1px,transparent_1px)] bg-size-[3px_3px]" />
      <button aria-label="Explorador" className={`${app} ml-[6px]`}>
        <svg viewBox="0 0 22 20" className="w-[22px] h-5"><path d="M1 3h7l2 2h10v13H1z" fill="#e8c66a" /><path d="M3 7h17v10H3z" fill="#f8e9ac" /><path d="M5 12q6-3 13 0v7h-3v-4q-4-2-7 0v4H5z" fill="#9fd2ec" /></svg>
      </button>
      <button aria-label="Reproductor multimedia" className={app}>
        <svg viewBox="0 0 20 18" className="w-5 h-[18px]"><path d="M3 1h15v15H3z" fill="#a9cfe6" /><circle cx="10" cy="9" r="6.500" fill="#ef7d1c" /><path d="M8 5.500l6 3.500-6 3.500z" fill="#fff" /></svg>
      </button>
      <button aria-label="Firefox" className={`${app} ml-[3px]`}>
        <svg viewBox="0 0 20 20" className="w-5 h-5"><circle cx="10" cy="10" r="9" fill="#e2701d" /><circle cx="10.500" cy="8" r="6" fill="#234a8a" /><path d="M1 7q1 6 7 7 6 0 8-3 0 6-6 7-8 0-9-8z" fill="#f39a22" /><path d="M4 7l4-2 2 3-3 3z" fill="#e2701d" /></svg>
      </button>
      <button aria-label="Notas" className={`${app} ${open} ml-px`}>
        <svg viewBox="0 0 18 20" className="w-[18px] h-5"><path d="M5 2l11-1-4 15-11 2z" fill="#d8eef4" /><path d="M6 3l10-2-4 14-10 1z" fill="#8fc3cf" opacity=".6" /><path d="M12 16l3-3 1-8-4 11z" fill="#4a8795" /></svg>
      </button>
      <button aria-label="Chrome" className={`${app} ml-px`}>
        <svg viewBox="0 0 20 20" className="w-5 h-5"><circle cx="10" cy="10" r="9" fill="#f6cc2c" /><path d="M10 10L2.200 5.500A9 9 0 0 1 17.800 5.500z" fill="#dd3b2b" /><path d="M10 10L2.200 5.500A9 9 0 0 0 9 19z" fill="#3ba24a" /><circle cx="10" cy="10" r="4.200" fill="#fff" /><circle cx="10" cy="10" r="3.200" fill="#3d7fdc" /></svg>
      </button>
      <button aria-label="Calculadora" className={`${app} ${open} ml-[2px]`}>
        <svg viewBox="0 0 16 20" className="w-4 h-5"><path d="M1 1h14v18H1z" fill="#dbe9f5" stroke="#7e9fbd" /><path d="M3 3h10v4H3z" fill="#f4e6b8" /><path d="M3 10h10M3 13h10M3 16h10" stroke="#6f8ca8" strokeWidth="2" strokeDasharray="2 1" /></svg>
      </button>
      <button className={`${app} ${open} ml-px`}><span className="w-[19px] h-[19px] bg-[#63666a] text-[8px] leading-[19px] font-bold text-center">Live</span></button>
      <button aria-label="Grabador" className={`${app} ${open} ml-px`}>
        <svg viewBox="0 0 20 20" className="w-5 h-5"><path d="M1 5l11-4 5 12-11 5z" fill="#e4e8e4" /><path d="M3 6l8-3 4 9-8 4z" fill="#243c24" /><circle cx="15" cy="15" r="4" fill="#dd2f2b" /><path d="M12 15h6" stroke="#fff" /></svg>
      </button>
      <button aria-label="Cubase" className={`${app} ml-px border border-white bg-white/65`}>
        <svg viewBox="0 0 20 20" className="w-5 h-5" fill="#b51f3a"><path d="M12 1L1 10l11 9 1-4-5-5 5-5z" /><circle cx="15" cy="10" r="3" /></svg>
      </button>
      <div className="ml-auto flex items-center gap-[7px]">
        <span className="text-[8px] mr-[3px]">ES</span>
        <i className="border-x-[3px] border-b-[3px] border-x-transparent border-b-white" />
        <svg viewBox="0 0 10 10" className="w-[10px] h-[10px]" fill="#fff" stroke="#fff"><path d="M0 3h2l3-3v10L2 7H0z" stroke="none" /><path d="M6.500 3v4M8.500 2v6" fill="none" /></svg>
        <svg viewBox="0 0 10 10" className="w-[10px] h-[10px]" fill="none" stroke="#fff"><path d="M2 2h7.500v5H2zM4 9h4M0 0v4h2" /></svg>
        <svg viewBox="0 0 10 10" className="w-[10px] h-[10px]"><path d="M1 0v10M1 1h6v5H1z" fill="#fff" stroke="#fff" /><circle cx="7" cy="7" r="3" fill="#d8322b" /><path d="M6 6l2 2M8 6L6 8" stroke="#fff" /></svg>
        <time className="ml-[3px] w-[41px] text-center text-[8px] leading-[11px]">11:00 a.m.<br />18/01/2015</time>
        <button aria-label="Mostrar escritorio" className="w-[9px] h-[26px] border border-[#5f86b4] bg-[#2a5690]" />
      </div>
    </footer>
  );
}

export default function App() {
  return (
    <div className="h-screen flex flex-col overflow-hidden bg-[#23303e] font-['Liberation_Sans',Arial,sans-serif]">
      <TitleBar />
      <MenuBar />
      <Toolbar />
      <p className="h-[18px] shrink-0 pl-[7px] bg-black text-white text-[7px] leading-[18px]">Ningún Objeto Seleccionado</p>
      <main className="relative flex-1 min-h-0 mt-[2px] flex overflow-hidden">
        <Inspector />
        <TrackList />
        <Timeline />
        <SideScroll />
        <Mixer />
        {/* click marker, pointer highlight and pointer */}
        <span className="absolute left-[145px] top-[428px] w-6 h-6 rounded-full border-[3px] border-[#ee8f97]/80" />
        <span className="absolute left-[243px] top-[365px] w-14 h-14 rounded-full bg-[#faf500] mix-blend-multiply" />
        <svg viewBox="0 0 10 14" className="absolute left-[270px] top-[392px] w-[10px] h-[14px]"><path d="M1 1v10l2.500-2 1.500 4 2-1-1.500-3.500H9z" fill="#fff" stroke="#333" strokeWidth=".8" /></svg>
      </main>
      <Taskbar />
    </div>
  );
}
